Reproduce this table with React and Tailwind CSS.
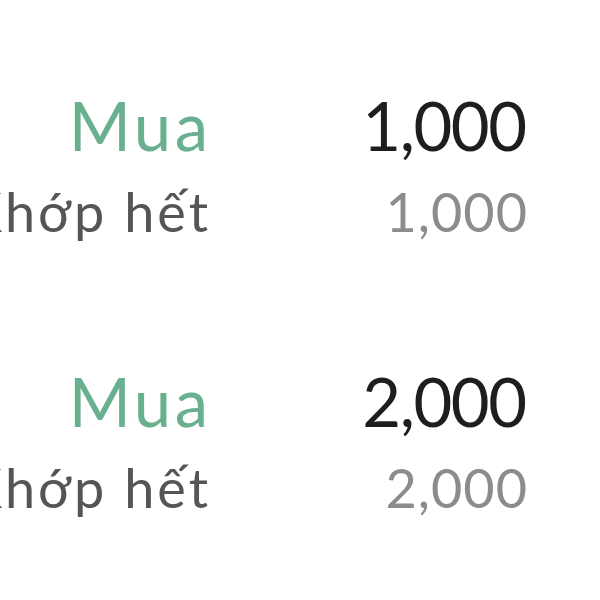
const orders = [
  { side: "Mua", qty: "1,000", filled: "1,000" },
  { side: "Mua", qty: "2,000", filled: "2,000" },
];

function OrderRow({ order }) {
  return (
    <div className="flex flex-col gap-[26px]">
      <div className="grid grid-cols-[208px_319px] leading-none text-[67px]">
        <div className="flex justify-end whitespace-nowrap text-[#68b08f]">
          <span className="tracking-[3.5px] -mr-[3.5px]">{order.side}</span>
        </div>
        <div className="flex justify-end whitespace-nowrap text-[#1e1e1e]">
          <span className="tracking-[-1.5px] -mr-[-1.5px]">{order.qty}</span>
        </div>
      </div>
      <div className="grid grid-cols-[208px_319px] leading-none text-[54px]">
        <div className="flex justify-end whitespace-nowrap text-[#555555]">
          <span className="tracking-[3px] -mr-[3px]">Khớp hết</span>
        </div>
        <div className="flex justify-end whitespace-nowrap text-[#8c8c8c]">
          <span className="tracking-[1px] -mr-[1px]">{order.filled}</span>
        </div>
      </div>
    </div>
  );
}

export default function App() {
  return (
    <div
      className="w-[600px] h-[600px] overflow-hidden bg-white pt-[92px] flex flex-col gap-[129px]"
      style={{ fontFamily: "Lato, 'Noto Sans', sans-serif" }}
    >
      {orders.map((o, i) => (
        <OrderRow key={i} order={o} />
      ))}
    </div>
  );
}
